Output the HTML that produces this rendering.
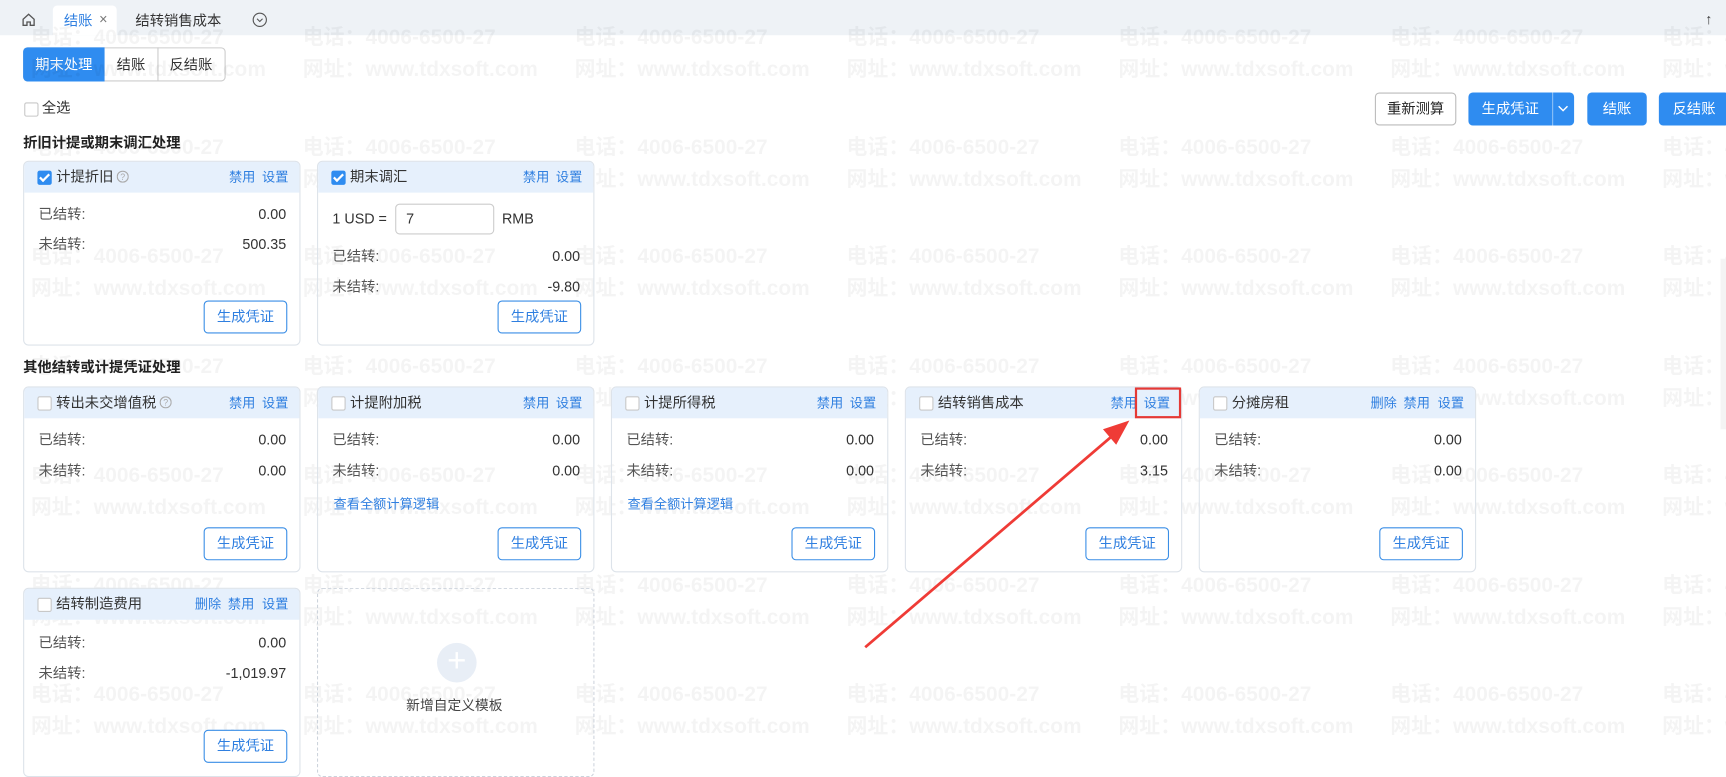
<!DOCTYPE html>
<html><head><meta charset="utf-8"><style>
html,body{margin:0;padding:0;width:1726px;height:772px;overflow:hidden;background:#fff}
#s{position:absolute;left:0;top:0;width:1568px;height:701px;transform:scale(1.10077);transform-origin:0 0;font-family:"Liberation Sans","Noto Sans CJK SC",sans-serif;font-size:13px;color:#333}
.a{position:absolute;white-space:nowrap;line-height:18px}
.bar{left:0;top:0;width:1568px;height:32px;background:#eef2f6}
.card{position:absolute;width:250px;border:1px solid #dde3ea;border-radius:5px;background:transparent;overflow:hidden}
.hd{height:28px;background:#e6f0fc;position:relative}
.cb{position:absolute;width:11px;height:11px;border:1px solid #c8c8c8;background:#fff;border-radius:2px}
.cbc{background:#2f8cf0;border-color:#2f8cf0}
.cbc:after{content:"";position:absolute;left:3px;top:0px;width:3px;height:7px;border:solid #fff;border-width:0 2px 2px 0;transform:rotate(45deg)}
.blue{color:#2f7fe0}
.btn{position:absolute;border:1px solid #3a8ee6;border-radius:4px;color:#2f7fe0;text-align:center;line-height:28px;height:28px;width:74px;background:#fff}
.wm{position:absolute;color:rgba(0,0,0,0.045);font-weight:bold;font-size:19px;white-space:nowrap}
.pb{position:absolute;height:29px;line-height:29px;border-radius:4px;background:#2f8cf0;color:#fff;text-align:center}
.q{display:inline-block;vertical-align:-1px;margin-left:3px}
</style></head><body><div id="s">
<div class="a bar"></div>
<svg class="a" style="left:19px;top:11px" width="14" height="14" viewBox="0 0 14 14"><path d="M2 6.5L7 2l5 4.5V12H8.5V9h-3v3H2z" fill="none" stroke="#555" stroke-width="1.2"/></svg>
<div class="a" style="left:48px;top:5px;width:58px;height:27px;background:#fff;border-radius:4px 4px 0 0"></div>
<div class="a blue" style="left:58px;top:10px">结账</div>
<div class="a" style="left:90px;top:9px;color:#777">×</div>
<div class="a" style="left:123px;top:10px">结转销售成本</div>
<svg class="a" style="left:229px;top:11px" width="14" height="14"><circle cx="7" cy="7" r="6" fill="none" stroke="#555"/><path d="M4.5 6l2.5 2.5L9.5 6" fill="none" stroke="#555"/></svg>
<div class="a" style="left:1549px;top:9px;color:#333">↑</div>

<div class="a" style="left:21px;top:43px;width:182px;height:29px;border:1px solid #ccc;border-radius:4px;background:#fff"></div>
<div class="pb" style="left:21px;top:43px;width:74px;height:31px;line-height:31px;border-radius:4px 0 0 4px">期末处理</div>
<div class="a" style="left:95px;top:43px;width:48px;height:31px;line-height:31px;text-align:center;border-right:1px solid #ccc">结账</div>
<div class="a" style="left:143px;top:43px;width:61px;height:31px;line-height:31px;text-align:center">反结账</div>

<div class="cb" style="left:22px;top:93px"></div>
<div class="a" style="left:38px;top:89px">全选</div>

<div class="a" style="left:1249px;top:84px;width:72px;height:28px;border:1px solid #bbb;border-radius:4px;line-height:28px;text-align:center;color:#222">重新测算</div>
<div class="pb" style="left:1334px;top:84px;width:96px;height:30px;line-height:30px"><span style="position:absolute;left:12px">生成凭证</span><span style="position:absolute;left:76px;top:0;width:1px;height:30px;background:#8cc0f7"></span><svg style="position:absolute;left:81px;top:11px" width="10" height="8"><path d="M1 1.5l4 4 4-4" fill="none" stroke="#fff" stroke-width="1.3"/></svg></div>
<div class="pb" style="left:1442px;top:84px;width:54px;height:30px;line-height:30px">结账</div>
<div class="pb" style="left:1507px;top:84px;width:64px;height:30px;line-height:30px">反结账</div>

<div class="a" style="left:21px;top:121px;font-weight:bold;color:#222">折旧计提或期末调汇处理</div>
<div class="a" style="left:21px;top:325px;font-weight:bold;color:#222">其他结转或计提凭证处理</div>

<!-- watermarks -->
<div id="wm"></div>

<!-- row1 -->
<div class="card" style="left:21px;top:146px;height:166px"><div class="hd"><div class="cb cbc" style="left:12px;top:8px"></div><span class="a" style="left:29px;top:5px">计提折旧<svg class="q" width="11" height="11"><circle cx="5.5" cy="5.5" r="5" fill="none" stroke="#aaa"/><text x="5.5" y="8.5" font-size="8" text-anchor="middle" fill="#aaa" font-family="Liberation Sans">?</text></svg></span><span class="a blue" style="left:186px;top:5px;font-size:12px">禁用</span><span class="a blue" style="left:216px;top:5px;font-size:12px">设置</span></div>
<span class="a" style="left:13px;top:39px;color:#555">已结转:</span><span class="a" style="right:12px;top:39px">0.00</span>
<span class="a" style="left:13px;top:66px;color:#555">未结转:</span><span class="a" style="right:12px;top:66px">500.35</span>
<div class="btn" style="left:163px;top:126px">生成凭证</div></div>

<div class="card" style="left:288px;top:146px;height:166px"><div class="hd"><div class="cb cbc" style="left:12px;top:8px"></div><span class="a" style="left:29px;top:5px">期末调汇</span><span class="a blue" style="left:186px;top:5px;font-size:12px">禁用</span><span class="a blue" style="left:216px;top:5px;font-size:12px">设置</span></div>
<span class="a" style="left:13px;top:43px">1 USD =</span><div class="a" style="left:70px;top:38px;width:88px;height:26px;border:1px solid #ccc;border-radius:4px;line-height:26px;text-indent:9px;background:#fff">7</div><span class="a" style="left:167px;top:43px">RMB</span>
<span class="a" style="left:13px;top:77px;color:#555">已结转:</span><span class="a" style="right:12px;top:77px">0.00</span>
<span class="a" style="left:13px;top:105px;color:#555">未结转:</span><span class="a" style="right:12px;top:105px">-9.80</span>
<div class="btn" style="left:163px;top:126px">生成凭证</div></div>

<!-- row2 -->
<div class="card" style="left:21px;top:351px;height:167px"><div class="hd"><div class="cb" style="left:12px;top:8px"></div><span class="a" style="left:29px;top:5px">转出未交增值税<svg class="q" width="11" height="11"><circle cx="5.5" cy="5.5" r="5" fill="none" stroke="#aaa"/><text x="5.5" y="8.5" font-size="8" text-anchor="middle" fill="#aaa" font-family="Liberation Sans">?</text></svg></span><span class="a blue" style="left:186px;top:5px;font-size:12px">禁用</span><span class="a blue" style="left:216px;top:5px;font-size:12px">设置</span></div>
<span class="a" style="left:13px;top:39px;color:#555">已结转:</span><span class="a" style="right:12px;top:39px">0.00</span>
<span class="a" style="left:13px;top:67px;color:#555">未结转:</span><span class="a" style="right:12px;top:67px">0.00</span>
<div class="btn" style="left:163px;top:127px">生成凭证</div></div>

<div class="card" style="left:288px;top:351px;height:167px"><div class="hd"><div class="cb" style="left:12px;top:8px"></div><span class="a" style="left:29px;top:5px">计提附加税</span><span class="a blue" style="left:186px;top:5px;font-size:12px">禁用</span><span class="a blue" style="left:216px;top:5px;font-size:12px">设置</span></div>
<span class="a" style="left:13px;top:39px;color:#555">已结转:</span><span class="a" style="right:12px;top:39px">0.00</span>
<span class="a" style="left:13px;top:67px;color:#555">未结转:</span><span class="a" style="right:12px;top:67px">0.00</span>
<span class="a blue" style="left:14px;top:97px;font-size:12px">查看全额计算逻辑</span>
<div class="btn" style="left:163px;top:127px">生成凭证</div></div>

<div class="card" style="left:555px;top:351px;height:167px"><div class="hd"><div class="cb" style="left:12px;top:8px"></div><span class="a" style="left:29px;top:5px">计提所得税</span><span class="a blue" style="left:186px;top:5px;font-size:12px">禁用</span><span class="a blue" style="left:216px;top:5px;font-size:12px">设置</span></div>
<span class="a" style="left:13px;top:39px;color:#555">已结转:</span><span class="a" style="right:12px;top:39px">0.00</span>
<span class="a" style="left:13px;top:67px;color:#555">未结转:</span><span class="a" style="right:12px;top:67px">0.00</span>
<span class="a blue" style="left:14px;top:97px;font-size:12px">查看全额计算逻辑</span>
<div class="btn" style="left:163px;top:127px">生成凭证</div></div>

<div class="card" style="left:822px;top:351px;height:167px"><div class="hd"><div class="cb" style="left:12px;top:8px"></div><span class="a" style="left:29px;top:5px">结转销售成本</span><span class="a blue" style="left:186px;top:5px;font-size:12px">禁用</span><span class="a blue" style="left:216px;top:5px;font-size:12px">设置</span></div>
<span class="a" style="left:13px;top:39px;color:#555">已结转:</span><span class="a" style="right:12px;top:39px">0.00</span>
<span class="a" style="left:13px;top:67px;color:#555">未结转:</span><span class="a" style="right:12px;top:67px">3.15</span>
<div class="btn" style="left:163px;top:127px">生成凭证</div></div>

<div class="card" style="left:1089px;top:351px;height:167px"><div class="hd"><div class="cb" style="left:12px;top:8px"></div><span class="a" style="left:29px;top:5px">分摊房租</span><span class="a blue" style="left:155px;top:5px;font-size:12px">删除</span><span class="a blue" style="left:185px;top:5px;font-size:12px">禁用</span><span class="a blue" style="left:216px;top:5px;font-size:12px">设置</span></div>
<span class="a" style="left:13px;top:39px;color:#555">已结转:</span><span class="a" style="right:12px;top:39px">0.00</span>
<span class="a" style="left:13px;top:67px;color:#555">未结转:</span><span class="a" style="right:12px;top:67px">0.00</span>
<div class="btn" style="left:163px;top:127px">生成凭证</div></div>

<!-- row3 -->
<div class="card" style="left:21px;top:534px;height:170px"><div class="hd"><div class="cb" style="left:12px;top:8px"></div><span class="a" style="left:29px;top:5px">结转制造费用</span><span class="a blue" style="left:155px;top:5px;font-size:12px">删除</span><span class="a blue" style="left:185px;top:5px;font-size:12px">禁用</span><span class="a blue" style="left:216px;top:5px;font-size:12px">设置</span></div>
<span class="a" style="left:13px;top:40px;color:#555">已结转:</span><span class="a" style="right:12px;top:40px">0.00</span>
<span class="a" style="left:13px;top:68px;color:#555">未结转:</span><span class="a" style="right:12px;top:68px">-1,019.97</span>
<div class="btn" style="left:163px;top:128px">生成凭证</div></div>

<div class="a" style="left:288px;top:534px;width:250px;height:170px;border:1px dashed #ccd3dc;border-radius:5px"></div>
<div class="a" style="left:397px;top:584px;width:36px;height:36px;border-radius:50%;background:#e8eef6;color:#fff;font-size:30px;line-height:34px;text-align:center">+</div>
<div class="a" style="left:369px;top:632px;color:#444;font-size:12.5px">新增自定义模板</div>

<div class="a" style="left:1031px;top:352px;width:38px;height:24px;border:2px solid #e53935"></div>
<svg class="a" style="left:0;top:0" width="1568" height="701"><line x1="786" y1="588" x2="1014" y2="393" stroke="#ef3b36" stroke-width="2.5"/><path d="M1026 382L1002 390L1014 404Z" fill="#ef3b36"/></svg>
<div class="a" style="left:1563px;top:235px;width:5px;height:155px;background:#f4f4f4"></div>
</div>
<script>
var h='';var xs=[28,275,522,769,1016,1263,1510];
for(var r=0;r<7;r++){for(var i=0;i<7;i++){h+='<div class="wm" style="left:'+xs[i]+'px;top:'+(19+r*99.5)+'px">电话：4006-6500-27</div><div class="wm" style="left:'+xs[i]+'px;top:'+(48+r*99.5)+'px">网址：www.tdxsoft.com</div>';}}
document.getElementById('wm').innerHTML=h;
</script>
</body></html>
